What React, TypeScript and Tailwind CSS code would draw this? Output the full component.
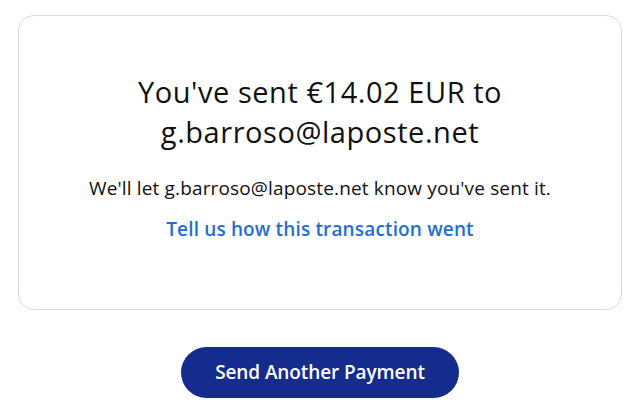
export default function App() {
  return (
    <div className="min-h-[416px] w-[637px] bg-white" style={{ fontFamily: "'Open Sans', Lato, sans-serif" }}>
      <div className="pt-[15px] px-[15px] pl-[18px]">
        <div className="w-[604px] rounded-[16px] border border-[#dadada] bg-white pt-[56px] pb-[68px] flex flex-col items-center text-center">
          <h1 className="text-[29px] leading-[40px] text-[#111111] font-normal tracking-[0.55px]">
            You've sent €14.02 EUR to
            <br />
            g.barroso@laposte.net
          </h1>
          <p className="mt-[24px] text-[19px] leading-[24px] text-[#111111] tracking-[0.15px]">
            We'll let g.barroso@laposte.net know you've sent it.
          </p>
          <a href="#" className="mt-[17px] text-[19px] leading-[24px] font-semibold text-[#1f6fd1] tracking-[0.15px]">
            Tell us how this transaction went
          </a>
        </div>
      </div>
      <div className="flex justify-center pt-[37px] pl-[3px]">
        <button className="h-[51px] w-[278px] rounded-full bg-[#142c8e] text-white text-[19px] font-semibold tracking-[-0.1px]">
          Send Another Payment
        </button>
      </div>
    </div>
  );
}
